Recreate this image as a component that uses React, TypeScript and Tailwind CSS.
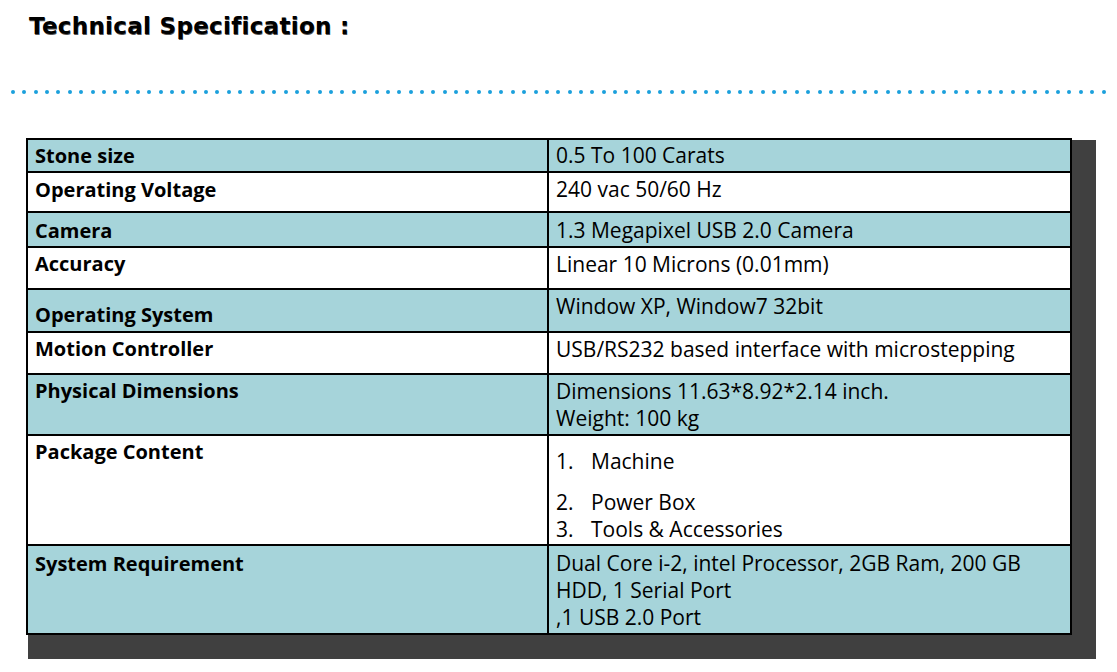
const specs = [
  { label: "Stone size", value: ["0.5 To 100 Carats"], h: "h-[33px]", lp: "pt-[2px]", vp: "pt-[2px]", teal: true },
  { label: "Operating Voltage", value: ["240 vac 50/60 Hz"], h: "h-[40px]", lp: "pt-[3px]", vp: "pt-[3px]", teal: false },
  { label: "Camera", value: ["1.3 Megapixel USB 2.0 Camera"], h: "h-[35px]", lp: "pt-[4px]", vp: "pt-[4px]", teal: true },
  { label: "Accuracy", value: ["Linear 10 Microns (0.01mm)"], h: "h-[42px]", lp: "pt-[2px]", vp: "pt-[3px]", teal: false },
  { label: "Operating System", value: ["Window XP, Window7 32bit"], h: "h-[43px]", lp: "pt-[11px]", vp: "pt-[3px]", teal: true },
  { label: "Motion Controller", value: ["USB/RS232 based interface with microstepping"], h: "h-[42px]", lp: "pt-[2px]", vp: "pt-[3px]", teal: false },
  { label: "Physical Dimensions", value: ["Dimensions 11.63*8.92*2.14 inch.", "Weight: 100 kg"], h: "h-[61px]", lp: "pt-[2px]", vp: "pt-[3px]", teal: true },
];

const dots = Array.from({ length: 97 });

function Dots() {
  return (
    <div className="flex justify-between ml-[11px] mr-[11px] h-[4px]">
      {dots.map((_, i) => (
        <span key={i} className="block w-[4px] h-[4px] rounded-full bg-[#1ba0dc]" />
      ))}
    </div>
  );
}

export default function App() {
  return (
    <div className="min-h-screen bg-white font-['Open_Sans','Noto_Sans',sans-serif] text-black">
      {/* Heading */}
      <h1 className="pl-[29px] pt-[12px] h-[49px] font-['DejaVu_Sans',sans-serif] font-bold text-[23px] tracking-[0.3px] leading-[28px] [text-shadow:0.5px_0.5px_0_#555]">
        Technical Specification :
      </h1>

      <div className="pt-[41px]">
        <Dots />
      </div>

      {/* Spec table */}
      <div className="pt-[44px] pl-[26px]">
        <div className="w-[1046px] border-2 border-black shadow-[13px_13px_0_11px_#404040] text-[21px] leading-[27px]">
          {specs.map((s) => (
            <div
              key={s.label}
              className={`grid grid-cols-2 border-b-2 border-black ${s.h} ${s.teal ? "bg-[#a6d4da]" : "bg-white"}`}
            >
              <div className={`border-r-2 border-black pl-[7px] font-bold text-[20px] ${s.lp}`}>{s.label}</div>
              <div className={`pl-[7px] ${s.vp}`}>
                {s.value.map((v) => (
                  <div key={v}>{v}</div>
                ))}
              </div>
            </div>
          ))}

          <div className="grid grid-cols-2 border-b-2 border-black h-[110px] bg-white">
            <div className="border-r-2 border-black pl-[7px] pt-[2px] font-bold text-[20px]">Package Content</div>
            <div className="pl-[7px] pt-[12px]">
              <div className="flex">
                <span className="w-[35px]">1.</span>
                <span>Machine</span>
              </div>
              <div className="flex mt-[14px]">
                <span className="w-[35px]">2.</span>
                <span>Power Box</span>
              </div>
              <div className="flex">
                <span className="w-[35px]">3.</span>
                <span>Tools &amp; Accessories</span>
              </div>
            </div>
          </div>

          <div className="grid grid-cols-2 h-[87px] bg-[#a6d4da]">
            <div className="border-r-2 border-black pl-[7px] pt-[4px] font-bold text-[20px]">System Requirement</div>
            <div className="pl-[7px] pt-[4px]">
              <div>Dual Core i-2, intel Processor, 2GB Ram, 200 GB</div>
              <div>HDD, 1 Serial Port</div>
              <div>,1 USB 2.0 Port</div>
            </div>
          </div>
        </div>
      </div>
    </div>
  );
}
